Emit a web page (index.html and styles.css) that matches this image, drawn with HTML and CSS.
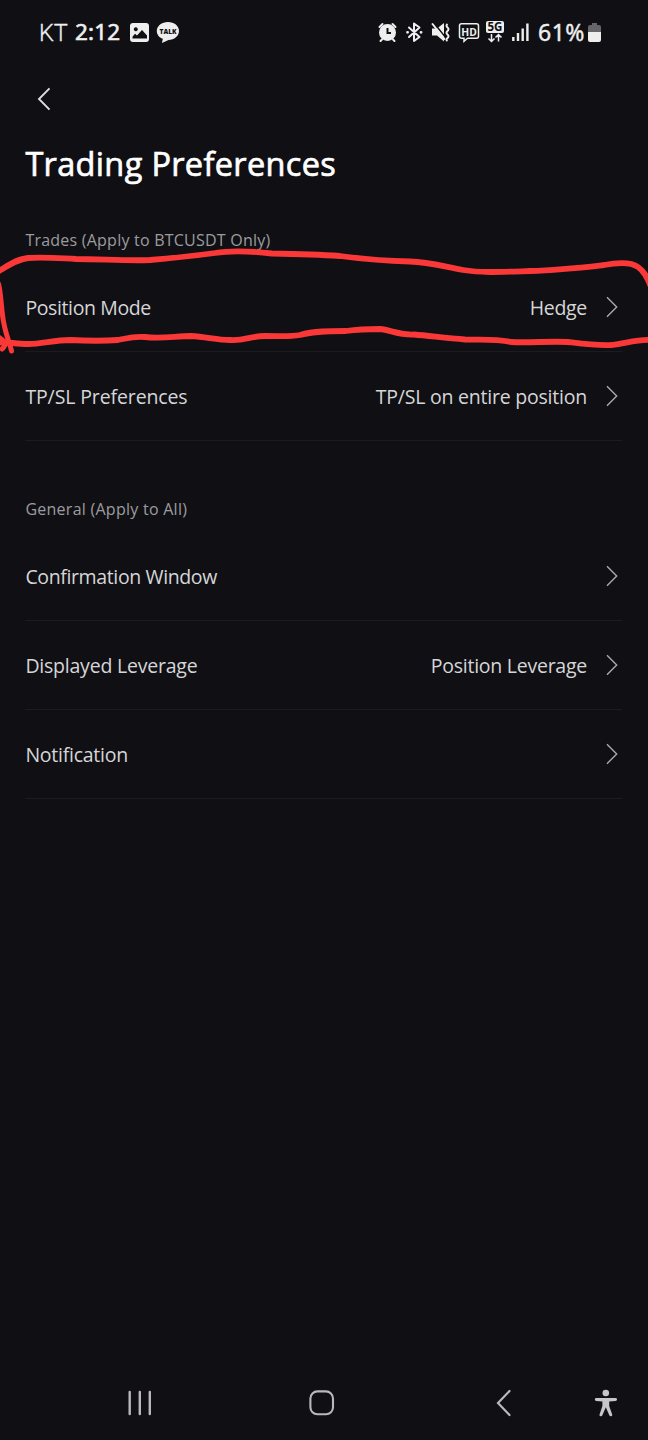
FILE: index.html
```
<!DOCTYPE html>
<html lang="en">
<head>
<meta charset="utf-8">
<title>Trading Preferences</title>
<link rel="stylesheet" href="styles.css">
</head>
<body>
<div class="screen">
  <header class="status">
    <span class="carrier">KT</span>
    <span class="clock">2:12</span>
    <svg class="status-left" width="52" height="26" viewBox="129 19 52 26">
      <path fill="#eee" fill-rule="evenodd" d="M133 23h13q3 0 3 3v13q0 3-3 3h-13q-3 0-3-3v-13q0-3 3-3zM132.500 38.500h14.500v-3l-5-5.500-5 5.500-2-1.800-2.500 3zM135.800 27.200a2 2 0 1 0 .01 0z"/>
      <path fill="#eee" d="M168 22c6.300 0 11 3.900 11 8.900s-4.700 8.900-10.500 9.100l-6.500 3 .8-4.200c-3.800-1.400-6-4.500-6-7.900 0-5 4.900-8.900 11.200-8.900z"/>
      <text class="talk" x="159.500" y="34" textLength="17" lengthAdjust="spacingAndGlyphs">TALK</text>
    </svg>
    <svg class="status-right" width="154" height="30" viewBox="377 18 154 30">
      <g fill="none" stroke="#eee" stroke-width="2" stroke-linecap="round">
        <circle cx="387.500" cy="32.500" r="7.500" fill="#eee"/>
        <path d="M379.500 27l3-3M395.500 27l-3-3M382 39.500l-1.500 1.500M393 39.500l1.500 1.500"/>
        <path stroke="#101014" d="M387.500 28v5h3.500" stroke-linecap="butt"/>
        <path d="M409 27.500l10.500 9.500-5.500 4v-17.500l5.500 4-10.500 9.500" stroke-linejoin="round"/>
        <path d="M407.500 32.300h.1M421 32.300h.1" stroke-width="2.800"/>
      </g>
      <path fill="#eee" d="M432 28.500h5l7-5.500v18.500l-7-6h-5z"/>
      <path stroke="#101014" stroke-width="1.500" d="M433.500 22.500l12.500 15.500"/>
      <path stroke="#eee" stroke-width="2" stroke-linecap="round" d="M432.500 24l12 15"/>
      <path fill="none" stroke="#eee" stroke-width="2" d="M447.500 24q-2 1.800 0 3.500t0 3.500 0 3.500 0 3.500 0 3"/>
      <path fill="none" stroke="#eee" stroke-width="1.500" d="M461.500 23.800h15q2 0 2 2v10.500q0 2-2 2h-9l-3.500 3v-3h-2.500q-2 0-2-2v-10.500q0-2 2-2z"/>
      <text class="hd" x="461.300" y="35.500" textLength="15.500" lengthAdjust="spacingAndGlyphs">HD</text>
      <rect x="486" y="21" width="18" height="12" rx="2" fill="#eee"/>
      <text class="five-g" x="487.500" y="31.300" textLength="15" lengthAdjust="spacingAndGlyphs">5G</text>
      <path fill="none" stroke="#eee" stroke-width="1.500" d="M491.500 34v7M488.500 38.500l3 3 3-3M498.500 41.500v-7M495.500 37.500l3-3 3 3"/>
      <path fill="none" stroke="#eee" stroke-width="2.400" d="M513.300 41v-4M518 41v-8M522.700 41v-12.500M527.400 41v-17.500"/>
    </svg>
    <span class="percent">61%</span>
    <svg class="battery" width="13" height="21" viewBox="588 22 13 21">
      <path fill="#66666a" d="M592 23h5v2h2q2 0 2 2v6h-13v-6q0-2 2-2h2z"/>
      <path fill="#eee" d="M588 32h13v8q0 2-2 2h-9q-2 0-2-2z"/>
    </svg>
  </header>

  <nav class="topbar">
    <svg width="14" height="24" viewBox="0 0 14 24"><path d="M12.500 1.300L2 12l10.500 10.700" fill="none" stroke="#dedee0" stroke-width="1.900"/></svg>
  </nav>

  <main class="content">
    <h1 class="title">Trading Preferences</h1>

    <section class="group">
      <h2 class="group-label trades">Trades (Apply to BTCUSDT Only)</h2>
      <div class="row">
        <span class="label t-mode">Position Mode</span>
        <span class="value t-hedge">Hedge</span>
        <svg class="chevron" viewBox="0 0 12 22"><path d="M1 1.300L10.700 11L1 20.700"/></svg>
      </div>
      <div class="row">
        <span class="label t-tpsl">TP/SL Preferences</span>
        <span class="value t-entire">TP/SL on entire position</span>
        <svg class="chevron" viewBox="0 0 12 22"><path d="M1 1.300L10.700 11L1 20.700"/></svg>
      </div>
    </section>

    <section class="group general">
      <h2 class="group-label all">General (Apply to All)</h2>
      <div class="row">
        <span class="label t-confirm">Confirmation Window</span>
        <span class="value"></span>
        <svg class="chevron" viewBox="0 0 12 22"><path d="M1 1.300L10.700 11L1 20.700"/></svg>
      </div>
      <div class="row">
        <span class="label t-displayed">Displayed Leverage</span>
        <span class="value t-leverage">Position Leverage</span>
        <svg class="chevron" viewBox="0 0 12 22"><path d="M1 1.300L10.700 11L1 20.700"/></svg>
      </div>
      <div class="row">
        <span class="label t-notify">Notification</span>
        <span class="value"></span>
        <svg class="chevron" viewBox="0 0 12 22"><path d="M1 1.300L10.700 11L1 20.700"/></svg>
      </div>
    </section>
  </main>

  <footer class="navbar">
    <svg class="recents" width="24" height="26" viewBox="0 0 24 26"><path d="M1.700 2v22M11.800 2v22M21.800 2v22" stroke="#b9b9bb" stroke-width="2.400" stroke-linecap="round"/></svg>
    <svg class="home" width="26" height="26" viewBox="0 0 26 26"><rect x="1.400" y="1.400" width="22.600" height="22.800" rx="7" fill="none" stroke="#b9b9bb" stroke-width="2.100"/></svg>
    <svg class="back" width="16" height="28" viewBox="0 0 16 28"><path d="M13.500 2L2 14l11.500 12" fill="none" stroke="#b9b9bb" stroke-width="2.200" stroke-linecap="round"/></svg>
    <svg class="access" width="24" height="28" viewBox="0 0 24 28"><circle cx="11.800" cy="4" r="3.300" fill="#c6c6c8"/><path fill="#c6c6c8" d="M2.300 9h19.200q1.500 0 1.500 1.400t-1.500 1.500l-6.300.6v4.500l3 8.500q.3 1.500-1 1.800-1.300.3-1.900-1.100l-3.500-8-3.400 8q-.6 1.400-1.900 1.100-1.300-.3-1-1.800l2.900-8.500v-4.500l-6.100-.6q-1.500-.1-1.500-1.500t1.500-1.400z"/></svg>
  </footer>

  <svg class="scribble" width="648" height="120" viewBox="0 240 648 120" fill="none" stroke="#fb3838" stroke-linecap="round" stroke-linejoin="round">
    <path stroke-width="5.800" d="M-4 273C5 267 17 259 28 258C44 257 55 258 76 259C100 259 128 261 150 260C176 258 200 255 215 253C232 250 250 251 272 253.500C300 254 325 255 340 256C362 259 380 261 410 261.500C430 262 445 267 463 270C482 273 500 272 530 271C560 270 586 267 604 265C620 262 631 262 638 267C645 272 648 279 651 287"/>
    <path stroke-width="5.800" d="M-3 343C5 341 14 344 28 344C42 344 54 340 70 340C88 341 105 341 118 340C128 338 134 336 145 337C162 339 176 336 191 336C207 337 217 340 230 340C245 341 250 336 265 336C282 336 288 337 300 335C314 331 330 331 346 331C361 329 370 329 380 329C391 330 397 335 414 334.500C431 336 446 338 465 339.500C485 340 496 339 511 342C530 343 549 341 568 342C584 344 598 346 612 345C627 343 638 339 651 340"/>
    <path stroke-width="5" d="M-1.500 284C1.500 295 1 311 4 324C6 335 10 344 11.500 351M-3 336C4 340 8 344 2 349"/>
  </svg>
</div>
</body>
</html>
```
FILE: styles.css
```
* { box-sizing: border-box; }
body { margin: 0; background: #101014; }
svg { display: block; flex: none; }
.screen {
  position: relative;
  display: flex;
  flex-direction: column;
  width: 648px;
  height: 1440px;
  overflow: hidden;
  background: #101014;
  color: #d6d6d8;
  font-family: "Open Sans", "Noto Sans", sans-serif;
}
.status {
  display: flex;
  align-items: center;
  height: 64px;
  padding-left: 38px;
  color: #efefef;
  font-size: 23px;
  line-height: 30px;
  white-space: nowrap;
}
.carrier { width: 37px; font-family: Roboto, sans-serif; font-weight: 300; font-size: 23.500px; padding: 1px 0 0 1px; -webkit-text-stroke: 0.300px #efefef; }
.clock { width: 54px; font-family: "Noto Sans", sans-serif; font-weight: 400; font-size: 22.500px; letter-spacing: 0.200px; -webkit-text-stroke: 0.600px #efefef; }
.status-right { margin-left: 196px; margin-top: 2px; }
.percent { width: 57px; padding-left: 7px; font-family: "Noto Sans", sans-serif; font-weight: 400; letter-spacing: 0.500px; -webkit-text-stroke: 0.400px #efefef; }
.battery { margin-top: 1px; }
.talk { font: 800 7.500px "Open Sans", sans-serif; fill: #101014; }
.hd { font: 700 11px "Open Sans", sans-serif; fill: #eee; }
.five-g { font: 700 12px "Open Sans", sans-serif; fill: #101014; }
.topbar { height: 70px; padding: 23px 0 0 37px; }
.content { padding: 0 26px 0 25.400px; flex: 1; }
.title {
  margin: 6px 0 0;
  height: 48px;
  font-size: 32.500px;
  line-height: 48px;
  font-weight: 400;
  letter-spacing: 0.330px;
  -webkit-text-stroke: 0.700px #fff;
  color: #fff;
  white-space: nowrap;
}
.group { padding-top: 40px; }
.general { padding-top: 56px; }
.group-label {
  margin: 0 0 10.500px;
  height: 24px;
  font-size: 16px;
  line-height: 24px;
  font-weight: 400;
  color: #9c9c9f;
  white-space: nowrap;
}
.trades { letter-spacing: 0.230px; }
.all { margin-bottom: 11.500px; letter-spacing: 0.260px; }
.row {
  display: flex;
  align-items: center;
  height: 89px;
  border-bottom: 1px solid #1b1b20;
  font-size: 19.500px;
  line-height: 28px;
  white-space: nowrap;
}
.label, .value { padding-top: 2px; }
.value { margin-left: auto; }
.t-mode { letter-spacing: -0.380px; }
.t-hedge { letter-spacing: -0.300px; }
.t-tpsl { letter-spacing: -0.120px; }
.t-entire { letter-spacing: -0.220px; }
.t-confirm { letter-spacing: -0.370px; }
.t-displayed { letter-spacing: -0.220px; }
.t-leverage { letter-spacing: -0.250px; }
.t-notify { letter-spacing: -0.250px; }
.chevron { width: 12px; height: 22px; margin: 0 4px 0 19px; fill: none; stroke: #aaaaad; stroke-width: 1.400; }
.navbar { display: flex; align-items: center; height: 74px; padding-left: 128px; }
.home { margin-left: 157px; }
.back { margin-left: 161px; }
.access { margin-left: 82px; }
.scribble { position: absolute; left: 0; top: 240px; pointer-events: none; }
```
